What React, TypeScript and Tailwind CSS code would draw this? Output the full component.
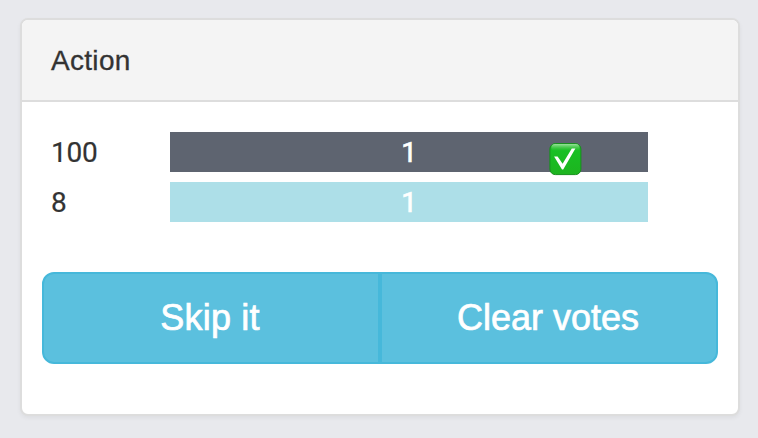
type Option = { label: string; votes: number; bar: string; chosen?: boolean };

const options: Option[] = [
  { label: '100', votes: 1, bar: 'bg-[#5e6470]', chosen: true },
  { label: '8', votes: 1, bar: 'bg-[#addfe8]' },
];

function CheckBadge() {
  return (
    <svg viewBox="0 0 34 34" className="absolute left-[379px] top-[11px] h-[34px] w-[34px]" aria-label="Voted">
      <defs>
        <linearGradient id="body" x1="0" y1="0" x2="0" y2="1">
          <stop offset="0" stopColor="#35b93a" />
          <stop offset="0.22" stopColor="#18c024" />
          <stop offset="1" stopColor="#1db41f" />
        </linearGradient>
        <linearGradient id="shine" x1="0" y1="0" x2="0" y2="1">
          <stop offset="0" stopColor="#9be59d" stopOpacity="0.95" />
          <stop offset="1" stopColor="#35c63b" stopOpacity="0" />
        </linearGradient>
      </defs>
      <rect x="0.9" y="0.6" width="31" height="31" rx="5.4" fill="url(#body)" stroke="#168f1c" strokeWidth="1" />
      <rect x="2.4" y="1.1" width="28" height="7" rx="3.5" fill="url(#shine)" />
      <path d="M5.1 13.6H8.6L13.6 20.8L22.8 5.4H26.4L14.2 26.4H13Z" fill="#fff" />
    </svg>
  );
}

function VoteRow({ label, votes, bar, chosen }: Option) {
  return (
    <div className="flex h-[40px] items-start font-[Roboto,'Liberation_Sans',sans-serif]">
      <div className="w-[119px] tracking-[-0.2px] leading-[42px] [-webkit-text-stroke:0.2px_#333]">{label}</div>
      <div className={`relative h-[40px] w-[478px] text-center leading-[42px] text-white ${bar}`}>
        <span className="[-webkit-text-stroke:0.7px_white]">{votes}</span>
        {chosen && <CheckBadge />}
      </div>
    </div>
  );
}

export default function App() {
  return (
    <main className="h-[438px] w-[758px] bg-[#e8e9ed] pl-[20px] pt-[18px] font-['Liberation_Sans',Arial,sans-serif] text-[28px] text-[#333]">
      <section className="flex h-[398px] w-[720px] flex-col rounded-[8px] border-2 border-[#dddddd] bg-white shadow-[0_2px_4px_rgba(0,0,0,0.05)]">
        <header className="flex h-[82px] shrink-0 items-center rounded-t-[6px] border-b-2 border-[#dddddd] bg-[#f4f4f4] px-[29px] pt-[2px]">
          <h3 className="leading-[32px] tracking-[0.3px] [-webkit-text-stroke:0.3px_#333]">Action</h3>
        </header>
        <div className="flex flex-col gap-[10px] pl-[29px] pt-[30px]">
          {options.map((option) => (
            <VoteRow key={option.label} {...option} />
          ))}
        </div>
        <div className="mx-[20px] mt-[50px] flex h-[92px] text-[36px] text-white [-webkit-text-stroke:0.7px_white]">
          <button className="flex-1 rounded-l-[12px] border-2 border-[#46b8da] bg-[#5bc0de] pr-[2px] tracking-[0.2px]">Skip it</button>
          <button className="flex-1 rounded-r-[12px] border-2 border-[#46b8da] bg-[#5bc0de] pr-[2px]">Clear votes</button>
        </div>
      </section>
    </main>
  );
}
